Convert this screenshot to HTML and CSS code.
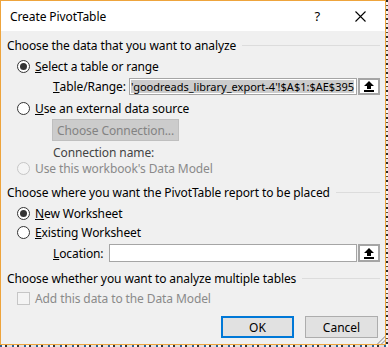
FILE: index.html
```html
<!DOCTYPE html>
<html lang="en">
<head>
  <meta charset="UTF-8">
  <title>Create PivotTable</title>
  <link rel="stylesheet" href="styles.css">
</head>
<body>
  <div class="screen">
    <div class="dialog">
      <!-- Title bar -->
      <div class="titlebar">
        <span class="title">Create PivotTable</span>
        <span class="help">?</span>
        <svg class="close" width="11" height="11" viewBox="0 0 11 11">
          <path d="M0.5 0.5 L10.5 10.5 M10.5 0.5 L0.5 10.5" stroke="#000" stroke-width="1.1" fill="none"/>
        </svg>
      </div>

      <div class="content">
        <!-- Source -->
        <div class="group-head h-first"><span>Choose the data that you want to analyze</span><i class="rule"></i></div>

        <div class="option m5">
          <span class="radio checked"></span>
          <span><u>S</u>elect a table or range</span>
        </div>

        <div class="field m4">
          <label class="field-label label-table"><u>T</u>able/Range:</label>
          <div class="textbox"><span class="sel">'goodreads_library_export-4'!$A$1:$AE$395</span></div>
          <div class="pick">
            <svg width="12" height="11" viewBox="0 0 12 11">
              <path d="M6 0 L11 5 L8 5 L8 8 L4 8 L4 5 L1 5 Z" fill="#000"/>
              <rect x="1" y="9" width="10" height="2" fill="#000"/>
            </svg>
          </div>
        </div>

        <div class="option m5">
          <span class="radio"></span>
          <span><u>U</u>se an external data source</span>
        </div>

        <div class="indent m3">
          <button class="btn-disabled" disabled>Choose Connection...</button>
        </div>

        <div class="option indent-text m3 muted">Connection name:</div>

        <div class="option m0 disabled">
          <span class="radio"></span>
          <span>Use this workbook's Data Model</span>
        </div>

        <!-- Destination -->
        <div class="group-head m8"><span>Choose where you want the PivotTable report to be placed</span><i class="rule"></i></div>

        <div class="option m5">
          <span class="radio checked"></span>
          <span><u>N</u>ew Worksheet</span>
        </div>

        <div class="option m3">
          <span class="radio"></span>
          <span><u>E</u>xisting Worksheet</span>
        </div>

        <div class="field field-loc m4">
          <label class="field-label label-loc"><u>L</u>ocation:</label>
          <div class="textbox"></div>
          <div class="pick">
            <svg width="12" height="11" viewBox="0 0 12 11">
              <path d="M6 0 L11 5 L8 5 L8 8 L4 8 L4 5 L1 5 Z" fill="#000"/>
              <rect x="1" y="9" width="10" height="2" fill="#000"/>
            </svg>
          </div>
        </div>

        <!-- Data model -->
        <div class="group-head m8"><span>Choose whether you want to analyze multiple tables</span><i class="rule"></i></div>

        <div class="option m4 disabled">
          <span class="check"></span>
          <span>Add this data to the Data Model</span>
        </div>

        <div class="actions">
          <button class="btn btn-default">OK</button>
          <button class="btn">Cancel</button>
        </div>
      </div>
      <div class="grip"></div>
    </div>
    <div class="sheet-edge"></div>
  </div>
  <div class="sheet-bottom"></div>
</body>
</html>
```

FILE: styles.css
```css
html, body {
  margin: 0;
  padding: 0;
}

body {
  width: 388px;
  height: 347px;
  overflow: hidden;
  font-family: "Noto Sans", "Open Sans", sans-serif;
  font-size: 12px;
  letter-spacing: -0.1px;
  color: #000;
  background: #fff;
}

.screen {
  display: flex;
}

.dialog {
  position: relative;
  width: 384px;
  height: 343px;
  border: 1px solid #eea43c;
  background: #f0f0f0;
  display: flex;
  flex-direction: column;
}

.sheet-edge {
  width: 2px;
  height: 345px;
  background: repeating-linear-gradient(to bottom, #2b2b2b 0 2px, #f4f4f4 2px 5px, #5a4a3a 5px 6px, #e8e8e8 6px 9px);
}

.sheet-bottom {
  height: 2px;
  background: repeating-linear-gradient(to right, #2f5f8f 0 2px, #f4f4f4 2px 5px, #333 5px 7px, #e0e0e0 7px 12px);
}

/* title bar */
.titlebar {
  height: 30px;
  background: #fff;
  display: flex;
  align-items: center;
  padding-left: 9px;
}

.title {
  font-size: 12px;
  flex: 1;
}

.help {
  font-size: 13px;
  margin-right: 35px;
}

.close {
  margin-right: 19px;
}

/* body */
.content {
  display: flex;
  flex-direction: column;
  padding: 0 5px 0 6px;
}

.h-first { margin-top: 6px; }
.m0 { margin-top: 0; }
.m3 { margin-top: 3px; }
.m4 { margin-top: 4px; }
.m5 { margin-top: 5px; }
.m8 { margin-top: 8px; }

.group-head {
  height: 16px;
  display: flex;
  align-items: center;
  white-space: nowrap;
}

.rule {
  flex: 1;
  height: 1px;
  background: #dcdcdc;
  margin-left: 6px;
}

.option {
  height: 16px;
  display: flex;
  align-items: center;
  padding-left: 10px;
  white-space: nowrap;
}

.radio {
  width: 11px;
  height: 11px;
  border: 1px solid #333;
  border-radius: 50%;
  background: #fff;
  margin-right: 5px;
  display: flex;
  align-items: center;
  justify-content: center;
  flex: none;
}

.radio.checked::after {
  content: "";
  width: 7px;
  height: 7px;
  border-radius: 50%;
  background: #333;
}

.check {
  width: 11px;
  height: 11px;
  border: 1px solid #c6c6c6;
  background: #f4f4f4;
  margin-right: 5px;
  flex: none;
}

.disabled {
  color: #8a8a8a;
}

.disabled .radio {
  border-color: #c6c6c6;
  background: #f4f4f4;
}

.muted {
  color: #444;
}

.indent-text {
  padding-left: 46px;
}

.indent {
  padding-left: 45px;
  display: flex;
}

/* fields */
.field {
  height: 17px;
  display: flex;
  align-items: stretch;
}

.field-loc {
  height: 18px;
}

.field-label {
  display: flex;
  align-items: center;
  padding-left: 46px;
  white-space: nowrap;
}

.label-table { width: 76px; }
.label-loc { width: 56px; }

.textbox {
  flex: 1;
  background: #fff;
  border: 1px solid #a5a5a5;
  display: flex;
  align-items: center;
  padding-left: 1px;
  overflow: hidden;
  white-space: nowrap;
  margin-right: 1px;
}

.sel {
  background: #cccccc;
  font-size: 11px;
  letter-spacing: 0;
  line-height: 13px;
}

.pick {
  width: 18px;
  border: 2px solid #a5a5a5;
  background: #fff;
  display: flex;
  align-items: center;
  justify-content: center;
}

/* buttons */
.btn-disabled {
  font-family: inherit;
  font-size: 12px;
  letter-spacing: -0.1px;
  width: 127px;
  height: 22px;
  padding: 0;
  background: #cccccc;
  border: 1px solid #bfbfbf;
  color: #838383;
}

.actions {
  display: flex;
  justify-content: flex-end;
  gap: 11px;
  margin-top: 10px;
  padding-right: 2px;
}

.btn {
  font-family: inherit;
  font-size: 12px;
  width: 73px;
  height: 22px;
  padding: 0;
  background: #e1e1e1;
  border: 1px solid #adadad;
  color: #000;
}

.btn-default {
  border: 2px solid #0078d7;
}

.grip {
  position: absolute;
  right: 0;
  bottom: 0;
  width: 10px;
  height: 10px;
  background: linear-gradient(135deg, transparent 55%, #b9b9b9 55% 65%, transparent 65% 75%, #b9b9b9 75% 85%, transparent 85%);
}
```
